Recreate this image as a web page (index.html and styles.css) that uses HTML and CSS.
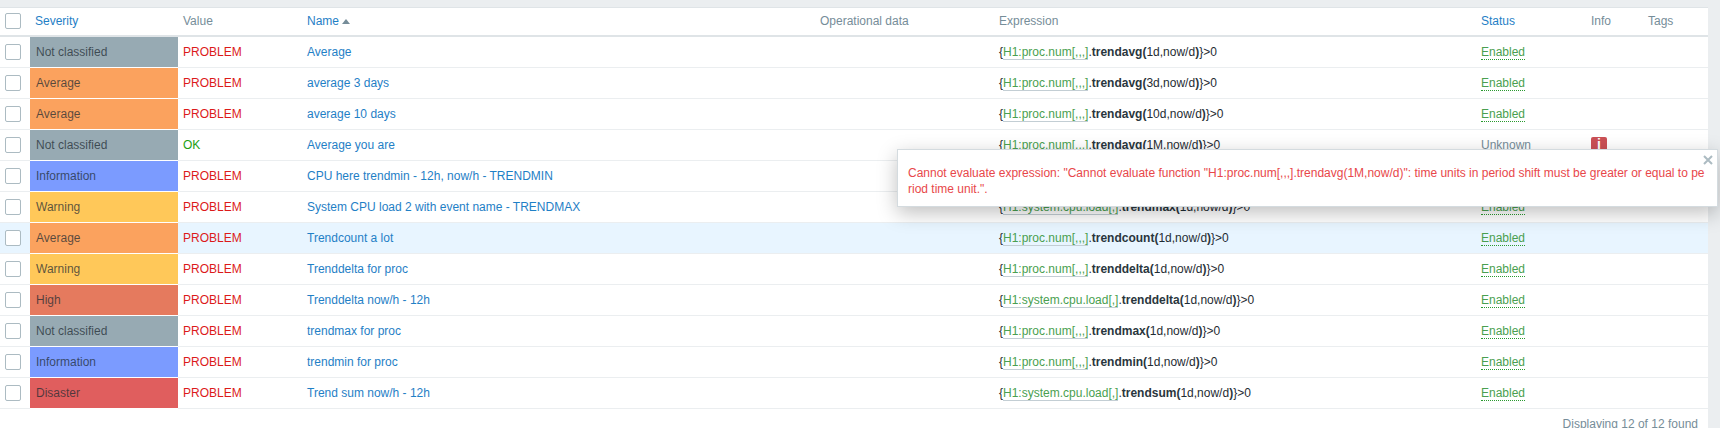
FILE: index.html
```html
<!DOCTYPE html>
<html lang="en">
<head>
<meta charset="utf-8">
<title>Triggers</title>
<link rel="stylesheet" href="styles.css">
</head>
<body>
<main class="panel">
<table class="list">
<colgroup><col class="c-check"><col class="c-sev"><col class="c-val"><col class="c-name"><col class="c-op"><col class="c-exp"><col class="c-status"><col class="c-info"><col class="c-tags"></colgroup>
<thead>
<tr><th class="check"><span class="box"></span></th><th class="link sev-head">Severity</th><th>Value</th><th class="link">Name <span class="arrow"></span></th><th>Operational data</th><th>Expression</th><th class="link">Status</th><th>Info</th><th>Tags</th></tr>
</thead>
<tbody>
<tr><td class="check"><span class="box"></span></td><td class="sev na">Not classified</td><td class="problem">PROBLEM</td><td class="link">Average</td><td></td><td>{<span class="item">H1:proc.num[,,,]</span>.<b>trendavg(</b>1d,now/d<b>)</b>}&gt;0</td><td><span class="enabled">Enabled</span></td><td></td><td></td></tr>
<tr><td class="check"><span class="box"></span></td><td class="sev avg">Average</td><td class="problem">PROBLEM</td><td class="link">average 3 days</td><td></td><td>{<span class="item">H1:proc.num[,,,]</span>.<b>trendavg(</b>3d,now/d<b>)</b>}&gt;0</td><td><span class="enabled">Enabled</span></td><td></td><td></td></tr>
<tr><td class="check"><span class="box"></span></td><td class="sev avg">Average</td><td class="problem">PROBLEM</td><td class="link">average 10 days</td><td></td><td>{<span class="item">H1:proc.num[,,,]</span>.<b>trendavg(</b>10d,now/d<b>)</b>}&gt;0</td><td><span class="enabled">Enabled</span></td><td></td><td></td></tr>
<tr><td class="check"><span class="box"></span></td><td class="sev na">Not classified</td><td class="ok">OK</td><td class="link">Average you are</td><td></td><td>{<span class="item">H1:proc.num[,,,]</span>.<b>trendavg(</b>1M,now/d<b>)</b>}&gt;0</td><td class="unknown">Unknown</td><td><span class="info-icon">i</span></td><td></td></tr>
<tr><td class="check"><span class="box"></span></td><td class="sev info">Information</td><td class="problem">PROBLEM</td><td class="link">CPU here trendmin - 12h, now/h - TRENDMIN</td><td></td><td>{<span class="item">H1:system.cpu.load[,]</span>.<b>trendmin(</b>1d,now/d<b>)</b>}&gt;0</td><td><span class="enabled">Enabled</span></td><td></td><td></td></tr>
<tr><td class="check"><span class="box"></span></td><td class="sev warn">Warning</td><td class="problem">PROBLEM</td><td class="link">System CPU load 2 with event name - TRENDMAX</td><td></td><td>{<span class="item">H1:system.cpu.load[,]</span>.<b>trendmax(</b>1d,now/d<b>)</b>}&gt;0</td><td><span class="enabled">Enabled</span></td><td></td><td></td></tr>
<tr class="hover"><td class="check"><span class="box"></span></td><td class="sev avg">Average</td><td class="problem">PROBLEM</td><td class="link">Trendcount a lot</td><td></td><td>{<span class="item">H1:proc.num[,,,]</span>.<b>trendcount(</b>1d,now/d<b>)</b>}&gt;0</td><td><span class="enabled">Enabled</span></td><td></td><td></td></tr>
<tr><td class="check"><span class="box"></span></td><td class="sev warn">Warning</td><td class="problem">PROBLEM</td><td class="link">Trenddelta for proc</td><td></td><td>{<span class="item">H1:proc.num[,,,]</span>.<b>trenddelta(</b>1d,now/d<b>)</b>}&gt;0</td><td><span class="enabled">Enabled</span></td><td></td><td></td></tr>
<tr><td class="check"><span class="box"></span></td><td class="sev high">High</td><td class="problem">PROBLEM</td><td class="link">Trenddelta now/h - 12h</td><td></td><td>{<span class="item">H1:system.cpu.load[,]</span>.<b>trenddelta(</b>1d,now/d<b>)</b>}&gt;0</td><td><span class="enabled">Enabled</span></td><td></td><td></td></tr>
<tr><td class="check"><span class="box"></span></td><td class="sev na">Not classified</td><td class="problem">PROBLEM</td><td class="link">trendmax for proc</td><td></td><td>{<span class="item">H1:proc.num[,,,]</span>.<b>trendmax(</b>1d,now/d<b>)</b>}&gt;0</td><td><span class="enabled">Enabled</span></td><td></td><td></td></tr>
<tr><td class="check"><span class="box"></span></td><td class="sev info">Information</td><td class="problem">PROBLEM</td><td class="link">trendmin for proc</td><td></td><td>{<span class="item">H1:proc.num[,,,]</span>.<b>trendmin(</b>1d,now/d<b>)</b>}&gt;0</td><td><span class="enabled">Enabled</span></td><td></td><td></td></tr>
<tr><td class="check"><span class="box"></span></td><td class="sev dis">Disaster</td><td class="problem">PROBLEM</td><td class="link">Trend sum now/h - 12h</td><td></td><td>{<span class="item">H1:system.cpu.load[,]</span>.<b>trendsum(</b>1d,now/d<b>)</b>}&gt;0</td><td><span class="enabled">Enabled</span></td><td></td><td></td></tr>
</tbody>
</table>
<div class="footer">Displaying 12 of 12 found</div>
</main>
<aside class="popup">
<span class="close" aria-label="Close"><svg width="10" height="10" viewBox="0 0 10 10"><path d="M1 1L9 9M9 1L1 9"/></svg></span>
<p>Cannot evaluate expression: "Cannot evaluate function "H1:proc.num[,,,].trendavg(1M,now/d)": time units in period shift must be greater or equal to period time unit.".</p>
</aside>
</body>
</html>
```
FILE: styles.css
```css
* { box-sizing: border-box; }
html, body { margin: 0; height: 428px; overflow: hidden; }
body { background: #ebeef0; font: 12px/14px "Liberation Sans", Arial, sans-serif; color: #1f2c33; position: relative; padding: 7px 12px 0 0; }
.panel { background: #fff; border-top: 1px solid #dfe4e7; height: 421px; }
.list { border-collapse: separate; border-spacing: 0; table-layout: fixed; width: 100%; }
.c-check { width: 30px; }
.c-sev { width: 148px; }
.c-val { width: 124px; }
.c-name { width: 513px; }
.c-op { width: 179px; }
.c-exp { width: 482px; }
.c-status { width: 110px; }
.c-info { width: 57px; }
.list th { height: 29px; padding: 0 5px 2px; text-align: left; font-weight: normal; color: #768d99; border-bottom: 2px solid #dfe4e7; white-space: nowrap; }
.list td { height: 31px; padding: 0 5px; border-bottom: 1px solid #ebeef0; white-space: nowrap; }
.list td.check { padding: 0 0 0 5px; }
.list th.check { padding: 0 0 2px 5px; }
.box { display: block; width: 16px; height: 16px; border: 1px solid #acbbc2; border-radius: 2px; background: #fff; }
.list th.link, .list td.link { color: #1f80c6; }
.arrow { display: inline-block; width: 0; height: 0; border: 4px solid transparent; border-top: 0; border-bottom: 5px solid #768d99; vertical-align: 1px; }
.list td.sev { border-bottom-color: #fff; color: rgba(31, 44, 51, .75); padding-left: 6px; }
.na { background: #97aab3; }
.info { background: #7b9bff; }
.warn { background: #ffc859; }
.avg { background: #fba25e; }
.high { background: #e57a5e; }
.dis { background: #e05e5e; }
.problem { color: #dc1a1a; }
.ok { color: #22a012; }
.item { color: #4a9f50; border-bottom: 1px solid #c3ced4; }
b { color: #2a363d; }
.enabled { color: #4a9f50; border-bottom: 1px dotted #2a9a30; }
.unknown { color: #768d99; }
.info-icon { display: block; width: 16px; height: 16px; border-radius: 2px; background: #cb5055; color: #fff; font-weight: bold; font-size: 14px; text-align: center; line-height: 15px; }
.hover td { background: #e8f5ff; }
.hover td.sev { background: #fba25e; }
.footer { padding: 8px 10px 0 0; text-align: right; color: #768d99; }
.popup { position: absolute; left: 897px; top: 149px; width: 821px; height: 58px; padding: 15px 10px; background: #fff; border: 1px solid #d4dbdf; box-shadow: 0 6px 20px rgba(0, 0, 0, .25); color: #e8474a; line-height: 16px; }
.popup p { margin: 0; word-break: break-all; }
.close { position: absolute; right: 4px; top: 5px; line-height: 0; }
.close path { stroke: #acbbc2; stroke-width: 2; fill: none; }
```
